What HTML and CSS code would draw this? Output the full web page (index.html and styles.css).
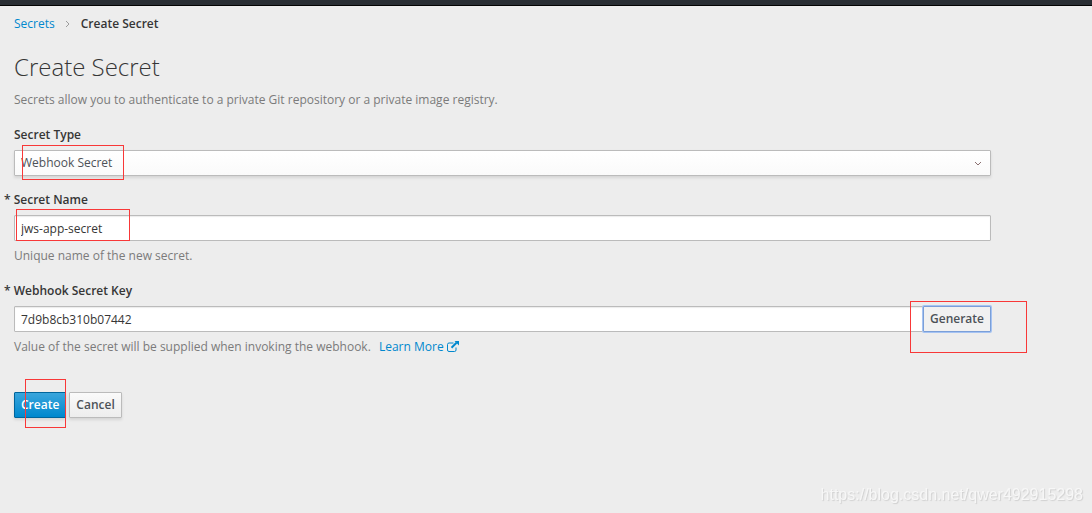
FILE: index.html
```html
<!DOCTYPE html>
<html lang="en">

<head>
    <meta charset="UTF-8">
    <meta name="viewport" content="width=device-width, initial-scale=1.0">
    <title>Create Secret</title>
    <link rel="stylesheet" href="styles.css">
</head>

<body>
    <header class="topbar"></header>

    <main class="content">
        <!-- Breadcrumb -->
        <nav aria-label="Breadcrumb">
            <ol class="breadcrumb">
                <li><a href="#">Secrets</a></li>
                <li class="divider" aria-hidden="true">
                    <svg width="5" height="8" viewBox="0 0 5 8"><path d="M1 1l3 3-3 3" /></svg>
                </li>
                <li class="active">Create Secret</li>
            </ol>
        </nav>

        <h1>Create Secret</h1>
        <p class="help">Secrets allow you to authenticate to a private Git repository or a private image registry.</p>

        <form>
            <div class="form-group">
                <label for="secretType">Secret Type</label>
                <div class="field">
                    <select id="secretType" class="select">
                        <option>Webhook Secret</option>
                    </select>
                    <svg class="caret" width="8" height="5" viewBox="0 0 8 5"><path d="M1 1l3 3 3-3" /></svg>
                    <span class="mark mark-type"></span>
                </div>
            </div>

            <div class="form-group">
                <label for="secretName" class="required">Secret Name</label>
                <div class="field">
                    <input type="text" id="secretName" class="input" value="jws-app-secret">
                    <span class="mark mark-name"></span>
                </div>
                <p class="help">Unique name of the new secret.</p>
            </div>

            <div class="form-group">
                <label for="webhookKey" class="required">Webhook Secret Key</label>
                <div class="field">
                    <input type="text" id="webhookKey" class="input" value="7d9b8cb310b07442">
                    <button type="button" class="btn btn-generate">Generate</button>
                    <span class="mark mark-generate"></span>
                </div>
                <p class="help">
                    Value of the secret will be supplied when invoking the webhook.
                    <a href="#" class="learn-more">Learn More
                        <svg width="12" height="11" viewBox="0 0 12 11">
                            <path d="M6.5 2H2Q.5 2 .5 3.500V9Q.5 10.500 2 10.500H7.500Q9 10.500 9 9V6.500" />
                            <path d="M4.500 6.800L9.500 1.800" class="shaft" />
                            <path d="M7.500 0H12V4.500Z" class="head" />
                        </svg></a>
                </p>
            </div>

            <div class="field buttons">
                <button type="button" class="btn btn-primary">Create</button>
                <button type="button" class="btn">Cancel</button>
                <span class="mark mark-create"></span>
            </div>
        </form>
    </main>

    <div class="watermark">https://blog.csdn.net/qwer492915298</div>
</body>

</html>
```

FILE: styles.css
```css
* {
    box-sizing: border-box;
}

body {
    margin: 0;
    min-height: 100vh;
    background: #ededed;
    color: #363636;
    font-family: "Open Sans", "Liberation Sans", sans-serif;
    font-size: 12px;
    line-height: 20px;
}

a {
    color: #0088ce;
    text-decoration: none;
}

.topbar {
    height: 6px;
    background: #292e34;
    border-bottom: 1px solid #030303;
}

.content {
    padding: 8px 101px 24px 14px;
}

/* Breadcrumb */
.breadcrumb {
    display: flex;
    margin: 0;
    padding: 0;
    list-style: none;
}

.breadcrumb .divider {
    padding: 0 11px 0 10px;
}

.breadcrumb svg {
    fill: none;
    stroke: #9c9c9c;
}

.breadcrumb .active {
    font-weight: 600;
}

h1 {
    margin: 18px 0 8px;
    font-size: 24px;
    font-weight: 300;
    line-height: 30px;
}

.help {
    margin: 0;
    padding: 5px 0 1px;
    color: #7b7b7b;
}

h1 + .help {
    padding: 0;
    margin: 0 0 15px;
}

/* Form */
.form-group {
    margin-bottom: 14px;
}

.form-group label {
    display: block;
    margin-bottom: 5px;
    font-weight: 600;
    line-height: 20px;
}

.form-group .required::before {
    content: "* ";
    margin-left: -10px;
}

.field {
    display: flex;
    position: relative;
}

.input,
.select {
    flex: 1;
    min-width: 0;
    height: 26px;
    padding: 2px 6px;
    border: 1px solid #bbb;
    border-radius: 1px;
    background: #fff;
    color: #363636;
    font: inherit;
}

.input {
    box-shadow: inset 0 1px 1px rgba(3, 3, 3, 0.08);
}

.select {
    appearance: none;
    background: linear-gradient(#fff, #fafafa);
    box-shadow: 0 2px 3px rgba(3, 3, 3, 0.1);
    color: #4d5258;
}

.caret {
    position: absolute;
    top: 11px;
    right: 9px;
    fill: none;
    stroke: #8b6f70;
}

.learn-more {
    margin-left: 5px;
}

.learn-more svg {
    vertical-align: -1px;
    fill: none;
    stroke: #0088ce;
}

.learn-more .shaft {
    stroke-width: 2;
}

.learn-more .head {
    fill: #0088ce;
    stroke: none;
}

/* Buttons */
.btn {
    height: 26px;
    padding: 2px 6px;
    border: 1px solid #bbb;
    border-radius: 1px;
    background: linear-gradient(#fafafa, #ededed);
    box-shadow: 0 2px 3px rgba(3, 3, 3, 0.1);
    color: #4d5258;
    font: inherit;
    font-weight: 600;
}

.btn-primary {
    border-color: #00659c;
    background: linear-gradient(#39a5dc, #0088ce);
    color: #fff;
}

.btn-generate {
    border-color: #7b9fd8;
    background: #f1f1f1;
    box-shadow: 0 0 0 1px #a5c3f3;
}

.buttons {
    gap: 3px;
    margin-top: 34px;
}

/* Highlight boxes */
.mark {
    position: absolute;
    border: 1px solid #f83838;
    pointer-events: none;
}

.mark-type {
    top: -5px;
    left: 8px;
    width: 102px;
    height: 35px;
}

.mark-name {
    top: -6px;
    left: 2px;
    width: 114px;
    height: 32px;
}

.mark-generate {
    top: -5px;
    right: -36px;
    width: 117px;
    height: 52px;
}

.mark-create {
    top: -13px;
    left: 11px;
    width: 41px;
    height: 49px;
}

.watermark {
    position: fixed;
    right: 9px;
    bottom: 8px;
    color: #f7f7f7;
    font-family: "Liberation Sans", sans-serif;
    font-size: 16px;
    text-shadow: 1px 1px 1px #d0d0d0;
}
```
